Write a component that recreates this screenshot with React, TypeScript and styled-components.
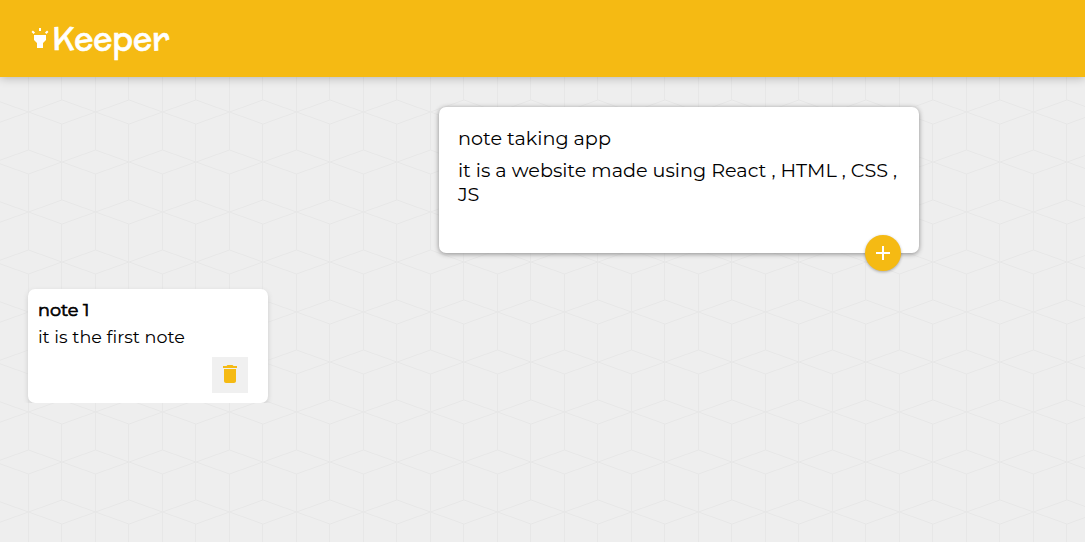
import React from "react";
import styled, { createGlobalStyle } from "styled-components";
import { MdAdd, MdDelete, MdHighlight } from "react-icons/md";

const cubes = encodeURIComponent(
  `<svg xmlns="http://www.w3.org/2000/svg" width="67" height="100" fill="none" stroke="#e7e7e7">
    <path d="M.5 0L34 -12L67.5 0L34 12ZM.5 100L34 88L67.5 100L34 112ZM-33 50L.5 38L34 50L.5 62ZM34 50L67.5 38L101 50L67.5 62Z"/>
    <path d="M.5 0V38M.5 62V100M33.5 12V88"/>
  </svg>`
);

const GlobalStyle = createGlobalStyle`
  * {
    box-sizing: border-box;
    margin: 0;
    padding: 0;
  }
  html {
    background: #eee url("data:image/svg+xml,${cubes}") 28px 112px;
    font-family: Montserrat, Inter, sans-serif;
    color: #000;
  }
`;

const Header = styled.header`
  display: flex;
  align-items: flex-start;
  height: 77px;
  padding: 16px 28px;
  background: #f5ba13;
  color: #fff;
  box-shadow: 0 0 10px rgba(0, 0, 0, 0.3);

  svg {
    margin-top: 10px;
  }
`;

const Logo = styled.h1`
  font: 400 32px/45px McLaren, Lato, sans-serif;
  -webkit-text-stroke: 0.6px #fff;
`;

const Editor = styled.section`
  position: relative;
  width: 480px;
  height: 146px;
  margin: 30px 0 0 439px;
  padding: 19px;
  border-radius: 7px;
  background: #fff;
  box-shadow: 0 1px 5px rgb(138, 137, 137);
  font-size: 19.2px;
  line-height: 24px;
`;

const Field = styled.p`
  & + & {
    margin-top: 8px;
  }
`;

const AddButton = styled.button`
  position: absolute;
  right: 18px;
  bottom: -18px;
  display: grid;
  place-items: center;
  width: 36px;
  height: 36px;
  border: 0;
  border-radius: 50%;
  background: #f5ba13;
  color: #fff;
  box-shadow: 0 1px 3px rgba(0, 0, 0, 0.3);
`;

const Note = styled.article`
  display: flex;
  flex-direction: column;
  width: 240px;
  height: 114px;
  margin: 36px 0 0 28px;
  padding: 10px;
  border-radius: 7px;
  background: #fff;
  box-shadow: 0 2px 5px #ccc;
`;

const NoteTitle = styled.h2`
  font-size: 17.6px;
  font-weight: 400;
  line-height: 22px;
  -webkit-text-stroke: 0.7px #000;
`;

const NoteText = styled.p`
  margin-top: 5px;
  font-size: 17.6px;
  line-height: 22px;
`;

const DeleteButton = styled.button`
  display: grid;
  place-items: center;
  align-self: flex-end;
  width: 36px;
  height: 36px;
  margin: 9px 10px 0 0;
  border: 0;
  background: #f0f0f0;
  color: #f5ba13;

  svg {
    margin-top: -2px;
  }
`;

export default function App() {
  return (
    <>
      <GlobalStyle />
      <Header>
        <MdHighlight size={24} />
        <Logo>Keeper</Logo>
      </Header>
      <main>
        <Editor>
          <Field>note taking app</Field>
          <Field>it is a website made using React , HTML , CSS , JS</Field>
          <AddButton aria-label="Add note">
            <MdAdd size={24} />
          </AddButton>
        </Editor>
        <Note>
          <NoteTitle>note 1</NoteTitle>
          <NoteText>it is the first note</NoteText>
          <DeleteButton aria-label="Delete note">
            <MdDelete size={24} />
          </DeleteButton>
        </Note>
      </main>
    </>
  );
}
